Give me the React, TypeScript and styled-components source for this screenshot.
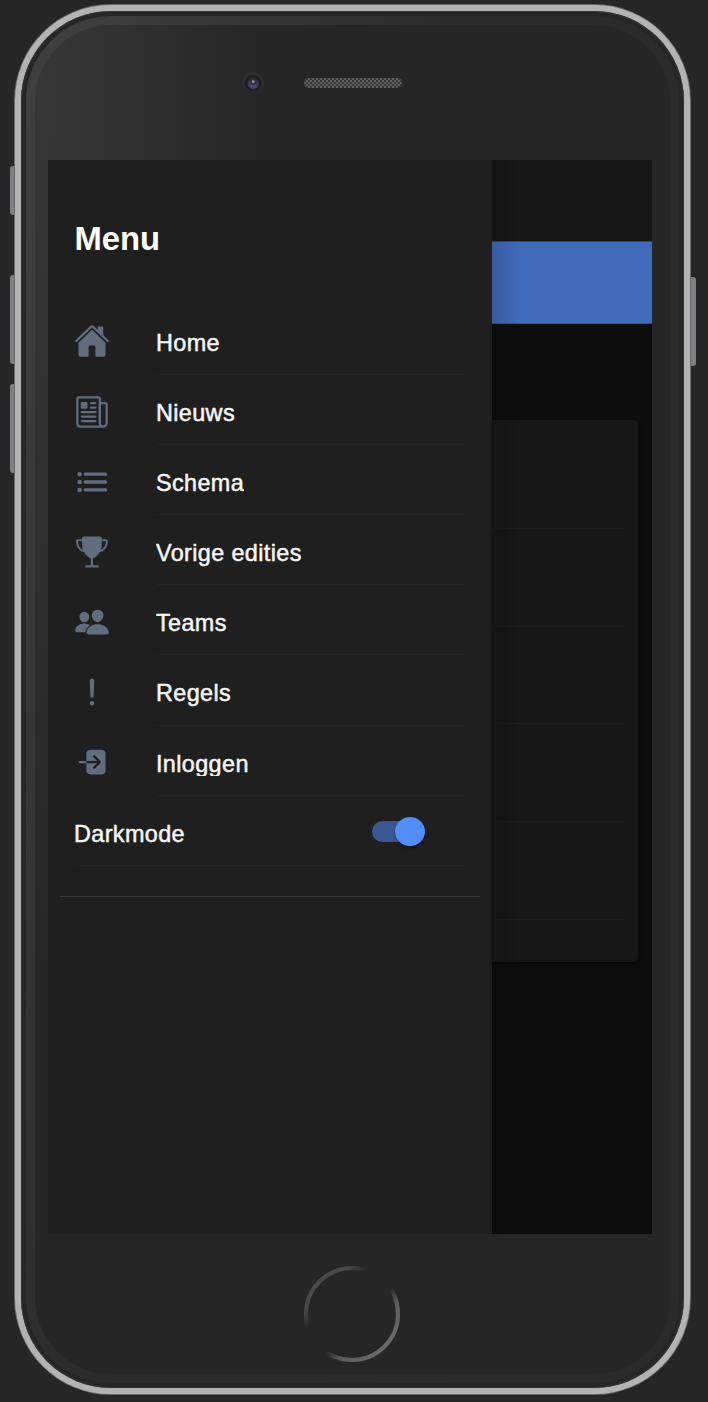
import React from "react";
import styled, { createGlobalStyle } from "styled-components";
import {
  IoHome,
  IoNewspaperOutline,
  IoList,
  IoPeople,
  IoAlert,
  IoLogIn,
} from "react-icons/io5";

const GlobalStyle = createGlobalStyle`
  *, *::before, *::after { box-sizing: border-box; }
  body { margin: 0; background: #262626; font-family: "Liberation Sans", Arial, sans-serif; }
`;

const Stage = styled.main`
  height: 1402px;
  padding: 4px 17px 7px 14px;
  background: #262626;
  overflow: hidden;
`;

const Device = styled.div`
  position: relative;
  width: 677px;
  height: 1391px;
  padding: 1.4px;
  border-radius: 97px;
  background: #6a6a6a;
`;

const Rim = styled.div`
  height: 100%;
  padding: 6px;
  border-radius: 95.6px;
  background: #b3b3b3;
`;

const Bezel = styled.div`
  height: 100%;
  padding: 4.6px;
  border-radius: 90px;
  background: #262626;
  box-shadow: inset 0 0 2px 1px #353535;
`;

const Band = styled.div`
  height: 100%;
  padding: 9px;
  border-radius: 85px;
  background: linear-gradient(105deg, #404040 0, #2b2b2b 42%, #2a2a2a 100%);
`;

const Face = styled.div`
  height: 100%;
  display: flex;
  flex-direction: column;
  border-radius: 76px;
  background: radial-gradient(ellipse 225px 900px at 0 5%, #373737, #262626 100%);
`;

const Forehead = styled.header`
  height: 135px;
  flex: none;
  display: flex;
  align-items: flex-start;
  gap: 40px;
  padding: 47px 0 0 207px;
`;

const Speaker = styled.div`
  width: 98px;
  height: 10px;
  margin-top: 6.5px;
  border-radius: 5px;
  background: repeating-conic-gradient(#363636 0 25%, #626262 0 50%) 0 0 / 4px 4px;
`;

const Screen = styled.div`
  display: flex;
  width: 604px;
  height: 1074px;
  flex: none;
  margin-left: 13px;
  overflow: hidden;
  background: #0d0d0d;
`;

const Menu = styled.nav`
  width: 444px;
  flex: none;
  display: flex;
  flex-direction: column;
  background: #1f1f1f;
`;

const Title = styled.h1`
  height: 145px;
  margin: 0;
  padding: 60px 0 0 26.5px;
  font-size: 32.8px;
  line-height: 38px;
  color: #fff;
`;

const Row = styled.div`
  display: flex;
  height: 70.1px;
  padding-left: 26px;
  margin-right: 27px;
  color: #616d7c;

  svg {
    flex: none;
    width: 36px;
    height: 36px;
    margin: 18.5px 46px 0 0;
  }
`;

const RowBody = styled.div`
  flex: 1;
  display: flex;
  align-items: flex-start;
  justify-content: space-between;
  padding-top: 24px;
  border-bottom: 1px solid #242424;
`;

const Label = styled.span<{ $clipped?: boolean }>`
  height: ${(p) => (p.$clipped ? 26 : 28)}px;
  overflow: hidden;
  font-size: 23.4px;
  line-height: 28px;
  letter-spacing: 0.38px;
  color: #f6f6f6;
  -webkit-text-stroke: 0.5px #f6f6f6;
  white-space: nowrap;
`;

const Toggle = styled.div`
  display: flex;
  align-items: center;
  justify-content: flex-end;
  width: 51px;
  height: 21px;
  margin: 1px 41.5px 0 0;
  border-radius: 11px;
  background: #3b5791;
`;

const Knob = styled.div`
  width: 30px;
  height: 29px;
  flex: none;
  margin-right: -1.5px;
  border-radius: 50%;
  background: #528dfa;
  box-shadow: 0 2px 3px rgba(0, 0, 0, 0.35);
`;

const Divider = styled.hr`
  width: 420px;
  height: 1.5px;
  margin: 30px 0 0 12px;
  border: 0;
  background: #3a3a3a;
`;

const Page = styled.section`
  position: relative;
  flex: 1;
  display: flex;
  flex-direction: column;

  &::before {
    content: "";
    position: absolute;
    inset: 0 auto 0 0;
    width: 28px;
    background: linear-gradient(90deg, rgba(0, 0, 0, 0.14), transparent);
  }
`;

const StatusBar = styled.div`
  height: 81px;
  flex: none;
  background: #171717;
`;

const Toolbar = styled.div`
  height: 83px;
  flex: none;
  background: #406aba;
  border-top: 1px solid #2d4470;
  border-bottom: 1px solid #31528f;
`;

const Card = styled.div`
  width: 146px;
  height: 542px;
  margin-top: 96px;
  padding: 11px 14px 0 0;
  border-radius: 0 5px 5px 0;
  background: #171717;
  box-shadow: 0 2px 4px rgba(0, 0, 0, 0.45);
`;

const CardRow = styled.div`
  height: 97.8px;
  border-bottom: 1px solid #1c1c1c;
`;

const Chin = styled.footer`
  flex: 1;
  padding: 32px 0 0 269px;
`;

const SideButton = styled.div<{ $side: "left" | "right"; $top: number; $length: number }>`
  position: absolute;
  ${(p) => p.$side}: -4.5px;
  top: ${(p) => p.$top}px;
  width: 4.5px;
  height: ${(p) => p.$length}px;
  border-radius: ${(p) => (p.$side === "left" ? "3px 0 0 3px" : "0 3px 3px 0")};
  background: #808084;
`;

const Trophy = () => (
  <svg viewBox="0 0 36 36" fill="none" stroke="currentColor" strokeLinecap="round" strokeLinejoin="round">
    <path
      d="M9.6 2.5h16.6q1.7 0 1.7 1.7C27.9 10 28 14.5 25.8 18.2C23.8 21.5 21 23.9 17.9 24.3C14.8 23.9 12 21.5 10 18.2C7.8 14.5 8 10 8 4.2Q8 2.5 9.6 2.5Z"
      fill="currentColor"
      stroke="none"
    />
    <path d="M8.6 6.2H3.6Q2.9 6.2 2.9 7C3.1 11.9 5.4 15.9 9.8 17.1" strokeWidth="2" />
    <path d="M27.2 6.2h5q.7 0 .7.8C32.7 11.9 30.4 15.9 26 17.1" strokeWidth="2" />
    <path d="M17.9 23.5v8.4M12 32.3h11.9" strokeWidth="2.2" />
  </svg>
);

const items = [
  { label: "Home", icon: IoHome },
  { label: "Nieuws", icon: IoNewspaperOutline },
  { label: "Schema", icon: IoList },
  { label: "Vorige edities", icon: Trophy },
  { label: "Teams", icon: IoPeople },
  { label: "Regels", icon: IoAlert },
  { label: "Inloggen", icon: IoLogIn, clipped: true },
];

const Camera = () => (
  <svg width="22" height="22" viewBox="0 0 22 22">
    <defs>
      <radialGradient id="lens" cx="50%" cy="62%" r="55%">
        <stop offset="0" stopColor="#5a4f78" />
        <stop offset="0.6" stopColor="#453b60" />
        <stop offset="1" stopColor="#262231" />
      </radialGradient>
      <linearGradient id="ring" x1="0" y1="0" x2="0" y2="1">
        <stop offset="0" stopColor="#2f2f2f" />
        <stop offset="1" stopColor="#272727" />
      </linearGradient>
    </defs>
    <circle cx="11" cy="11" r="11" fill="url(#ring)" />
    <circle cx="11" cy="11" r="8" fill="#1e1e1f" />
    <circle cx="11.3" cy="11.3" r="6" fill="url(#lens)" />
    <circle cx="11.3" cy="10.6" r="2.6" fill="#2e2942" />
    <circle cx="11.3" cy="9.7" r="1.4" fill="#9993a8" />
  </svg>
);

const HomeButton = () => (
  <svg width="96" height="96" viewBox="0 0 96 96">
    <defs>
      <linearGradient id="home" x1="0.146" y1="0.146" x2="0.854" y2="0.854">
        <stop offset="0" stopColor="#4a4a4a" />
        <stop offset="0.12" stopColor="#474747" />
        <stop offset="0.27" stopColor="#262626" />
        <stop offset="0.6" stopColor="#262626" />
        <stop offset="0.75" stopColor="#5c5c5c" />
        <stop offset="1" stopColor="#686868" />
      </linearGradient>
    </defs>
    <circle cx="48" cy="48" r="46" fill="none" stroke="url(#home)" strokeWidth="4" />
  </svg>
);

export default function App() {
  return (
    <Stage>
      <GlobalStyle />
      <Device>
        <SideButton $side="left" $top={162} $length={49} />
        <SideButton $side="left" $top={271} $length={89} />
        <SideButton $side="left" $top={380} $length={89} />
        <SideButton $side="right" $top={273} $length={89} />
        <Rim>
          <Bezel>
            <Band>
              <Face>
                <Forehead>
                  <Camera />
                  <Speaker />
                </Forehead>
                <Screen>
                  <Menu>
                    <Title>Menu</Title>
                    {items.map(({ label, icon: Icon, clipped }) => (
                      <Row key={label}>
                        <Icon />
                        <RowBody>
                          <Label $clipped={clipped}>{label}</Label>
                        </RowBody>
                      </Row>
                    ))}
                    <Row>
                      <RowBody>
                        <Label>Darkmode</Label>
                        <Toggle>
                          <Knob />
                        </Toggle>
                      </RowBody>
                    </Row>
                    <Divider />
                  </Menu>
                  <Page>
                    <StatusBar />
                    <Toolbar />
                    <Card>
                      {[0, 1, 2, 3, 4].map((n) => (
                        <CardRow key={n} />
                      ))}
                    </Card>
                  </Page>
                </Screen>
                <Chin>
                  <HomeButton />
                </Chin>
              </Face>
            </Band>
          </Bezel>
        </Rim>
      </Device>
    </Stage>
  );
}
